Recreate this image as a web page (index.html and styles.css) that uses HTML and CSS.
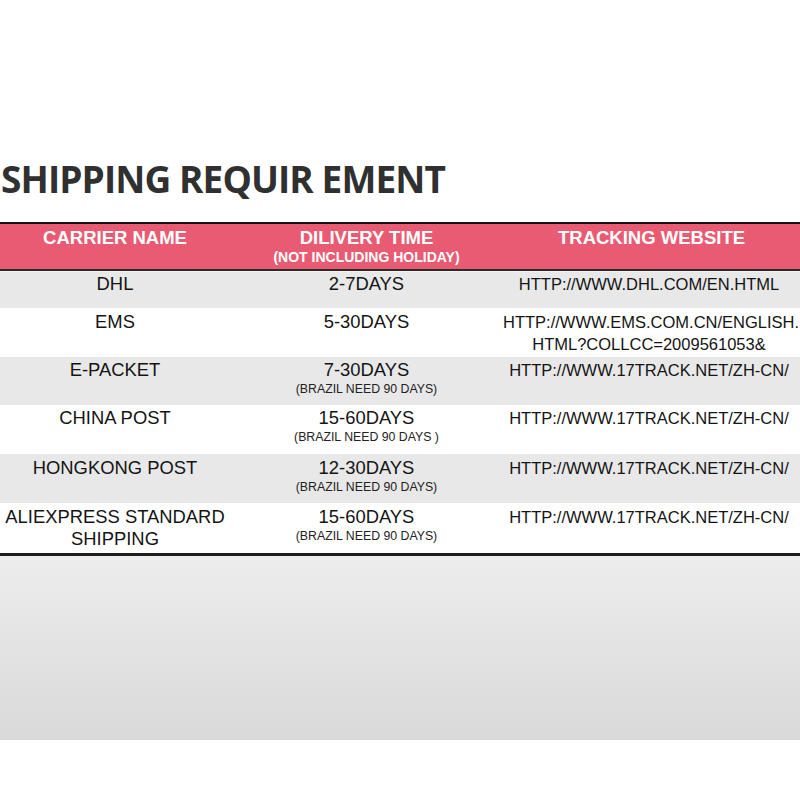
FILE: index.html
```html
<!DOCTYPE html>
<html>
<head>
<meta charset="utf-8">
<link rel="stylesheet" href="styles.css">
</head>
<body>
<div class="page">
  <h1 class="title">SHIPPING REQUIR EMENT</h1>
  <div class="table">
    <div class="head">
      <div class="hcell"><div class="htext">CARRIER NAME</div></div>
      <div class="hcell"><div class="htext">DILIVERY TIME</div><div class="hsub">(NOT INCLUDING HOLIDAY)</div></div>
      <div class="hcell"><div class="htext">TRACKING WEBSITE</div></div>
    </div>
    <div class="body">
      <div class="row alt r1">
        <div class="cell">DHL</div>
        <div class="cell">2-7DAYS</div>
        <div class="cell url">HTTP://WWW.DHL.COM/EN.HTML</div>
      </div>
      <div class="row r2">
        <div class="cell">EMS</div>
        <div class="cell">5-30DAYS</div>
        <div class="cell url">HTTP://WWW.EMS.COM.CN/ENGLISH.<br>HTML?COLLCC=2009561053&amp;</div>
      </div>
      <div class="row alt r3">
        <div class="cell">E-PACKET</div>
        <div class="cell">7-30DAYS<div class="note">(BRAZIL NEED 90 DAYS)</div></div>
        <div class="cell url">HTTP://WWW.17TRACK.NET/ZH-CN/</div>
      </div>
      <div class="row r4">
        <div class="cell">CHINA POST</div>
        <div class="cell">15-60DAYS<div class="note">(BRAZIL NEED 90 DAYS )</div></div>
        <div class="cell url">HTTP://WWW.17TRACK.NET/ZH-CN/</div>
      </div>
      <div class="row alt r5">
        <div class="cell">HONGKONG POST</div>
        <div class="cell">12-30DAYS<div class="note">(BRAZIL NEED 90 DAYS)</div></div>
        <div class="cell url">HTTP://WWW.17TRACK.NET/ZH-CN/</div>
      </div>
      <div class="row r6">
        <div class="cell">ALIEXPRESS STANDARD<br>SHIPPING</div>
        <div class="cell">15-60DAYS<div class="note">(BRAZIL NEED 90 DAYS)</div></div>
        <div class="cell url">HTTP://WWW.17TRACK.NET/ZH-CN/</div>
      </div>
    </div>
  </div>
  <div class="shade"></div>
</div>
</body>
</html>
```

FILE: styles.css
```css
html, body {
  margin: 0;
  padding: 0;
  background: #ffffff;
}

.page {
  width: 800px;
  padding-top: 152px;
}

.title {
  margin: 0 0 17px 0;
  padding-left: 1px;
  font-family: "Open Sans", "DejaVu Sans", sans-serif;
  font-weight: 700;
  font-size: 37px;
  line-height: 53px;
  color: #303030;
  letter-spacing: -0.9px;
}

.table {
  width: 800px;
  font-family: "Liberation Sans", Arial, sans-serif;
}

.head {
  display: grid;
  grid-template-columns: 230px 273px 297px;
  height: 45px;
  background: #e95b73;
  border-top: 2px solid #111;
  border-bottom: 2px solid #2a2a2a;
  color: #ffffff;
  font-weight: 700;
  text-align: center;
}

.hcell {
  padding-top: 4px;
}

.htext {
  font-size: 18.5px;
  line-height: 20px;
}

.hsub {
  font-size: 14px;
  line-height: 16px;
  margin-top: 1px;
}

.body {
  border-top: 1px solid #f4f4f4;
  border-bottom: 3px solid #1e1e1e;
}

.row {
  display: grid;
  grid-template-columns: 230px 273px 297px;
  background: #ffffff;
  color: #141414;
  text-align: center;
}

.row.alt {
  background: #e8e8e8;
}

.r1 { height: 36px; }
.r2 { height: 49px; }
.r3 { height: 48px; }
.r4 { height: 49px; }
.r5 { height: 49px; }
.r6 { height: 50px; }

.cell {
  padding-top: 3px;
  font-size: 18.4px;
  line-height: 22px;
  white-space: nowrap;
}

.r1 .cell { padding-top: 1px; }
.r3 .cell { padding-top: 2px; }
.r4 .cell { padding-top: 2px; }

.cell.url {
  font-size: 16.5px;
  padding-right: 5px;
}

.note {
  font-size: 12.3px;
  line-height: 14px;
  margin-top: 1px;
  color: #222;
}

.shade {
  height: 184px;
  background: linear-gradient(to bottom, #ededed, #d9d9d9);
}
```
